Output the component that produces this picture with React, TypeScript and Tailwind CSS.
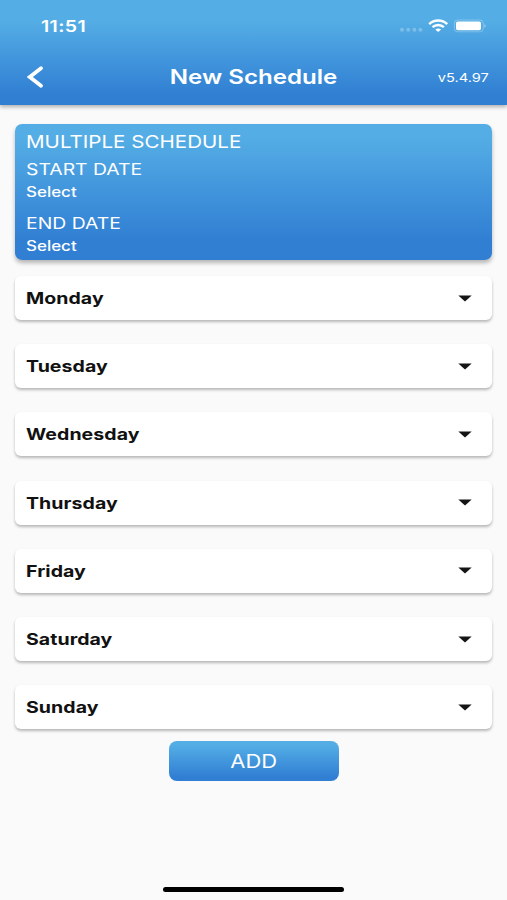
import type { ReactNode } from 'react';

const days = ['Monday', 'Tuesday', 'Wednesday', 'Thursday', 'Friday', 'Saturday', 'Sunday'];

function Wide({ className = '', children }: { className?: string; children: ReactNode }) {
  return <span className={`inline-block whitespace-nowrap ${className}`}>{children}</span>;
}

function StatusBar() {
  return (
    <div className="flex h-[52px] items-center justify-between pr-[20px] pl-[41px]">
      <Wide className="origin-left scale-x-[1.22] text-[16px] leading-5 font-semibold tracking-[0.3px]">11:51</Wide>
      <svg width="88" height="16" viewBox="0 0 88 16" fill="none">
        <g fill="#fff" fillOpacity=".25">
          <circle cx="3" cy="11.8" r="2" />
          <circle cx="9.2" cy="11.8" r="2" />
          <circle cx="15.4" cy="11.8" r="2" />
          <circle cx="21.4" cy="11.8" r="2" />
        </g>
        <g stroke="#fff" strokeWidth="2.4">
          <path d="M30.2 6.1C35.2 1.2 43.2 1.2 48.2 6.1" />
          <path d="M33.5 9.2C36.8 6.2 41.6 6.2 44.9 9.2" />
        </g>
        <path d="M36.3 11.5C38 10 40.4 10 42.1 11.5L39.2 13.9Z" fill="#fff" />
        <rect x="55.3" y="2" width="29" height="11.8" rx="3.4" stroke="#fff" strokeOpacity=".28" />
        <rect x="57" y="3.5" width="25" height="8.8" rx="1.8" fill="#fff" />
        <path d="M85.4 6.2C87.4 6.8 87.4 9.2 85.4 9.8Z" fill="#fff" fillOpacity=".4" />
      </svg>
    </div>
  );
}

function DayRow({ day }: { day: string }) {
  return (
    <button className="flex h-[44px] w-full items-center justify-between rounded-[6px] bg-white pr-[20px] pl-[10.5px] text-[#111] shadow-[0_2px_3px_rgba(0,0,0,0.27)]">
      <Wide className="origin-left scale-x-[1.22] text-[16px] leading-5 font-bold tracking-[0.05px]">{day}</Wide>
      <svg width="14" height="7" viewBox="0 0 14 7" fill="#151515">
        <path d="M0.3 0.5H13.7L7 6.5Z" />
      </svg>
    </button>
  );
}

export default function App() {
  return (
    <div className="flex h-[900px] w-[507px] flex-col overflow-hidden bg-[#fafafa] font-['Inter',sans-serif] text-white">
      <header className="h-[105px] shrink-0 bg-linear-to-b from-[#54ade5] from-20% to-[#317fd3] to-90% shadow-[0_2px_4px_rgba(0,0,0,0.3)]">
        <StatusBar />
        <div className="grid h-[50px] grid-cols-[1fr_auto_1fr] items-center pr-[18px] pl-[27px]">
          <svg width="17" height="22" viewBox="0 0 17 22" fill="none" stroke="#fff" strokeWidth="3.7">
            <path d="M14 2.2L2.8 11L14 19.8" strokeLinecap="round" strokeLinejoin="miter" />
          </svg>
          <Wide className="-translate-x-[4px] scale-x-[1.205] text-[20px] leading-6 font-semibold">New Schedule</Wide>
          <Wide className="mt-[2px] origin-right scale-x-[1.22] justify-self-end text-[12px] leading-4">v5.4.97</Wide>
        </div>
      </header>
      <main className="flex flex-1 flex-col px-[15px] pt-[18.5px]">
        <section className="flex h-[136.5px] shrink-0 flex-col items-start rounded-[7px] bg-linear-to-b from-[#54ade5] from-10% to-[#317fd3] to-85% pt-[7px] pl-[10.5px] shadow-[0_3px_4px_rgba(0,0,0,0.28)]">
          <Wide className="origin-left scale-x-[1.21] text-[17px] leading-[23px]">MULTIPLE SCHEDULE</Wide>
          <Wide className="mt-[4px] origin-left scale-x-[1.21] text-[16px] leading-[22px]">START DATE</Wide>
          <Wide className="mt-[1px] origin-left scale-x-[1.21] text-[14px] leading-[22px] font-medium">Select</Wide>
          <Wide className="mt-[9px] origin-left scale-x-[1.21] text-[16px] leading-[22px]">END DATE</Wide>
          <Wide className="mt-[1px] origin-left scale-x-[1.21] text-[14px] leading-[22px] font-medium">Select</Wide>
        </section>
        <div className="mt-[16px] flex flex-col gap-[24.24px]">
          {days.map((day) => (
            <DayRow key={day} day={day} />
          ))}
        </div>
        <button className="mt-[11.6px] ml-[154px] flex h-[40px] w-[170px] shrink-0 items-center justify-center rounded-[8px] bg-linear-to-b from-[#54ade5] from-10% to-[#317fd3] to-90% pt-[2px]">
          <Wide className="-translate-x-[0.5px] scale-x-[1.22] text-[18px] leading-6">ADD</Wide>
        </button>
      </main>
      <footer className="flex h-[13px] shrink-0 justify-center">
        <div className="h-[5px] w-[181px] rounded-full bg-black" />
      </footer>
    </div>
  );
}
